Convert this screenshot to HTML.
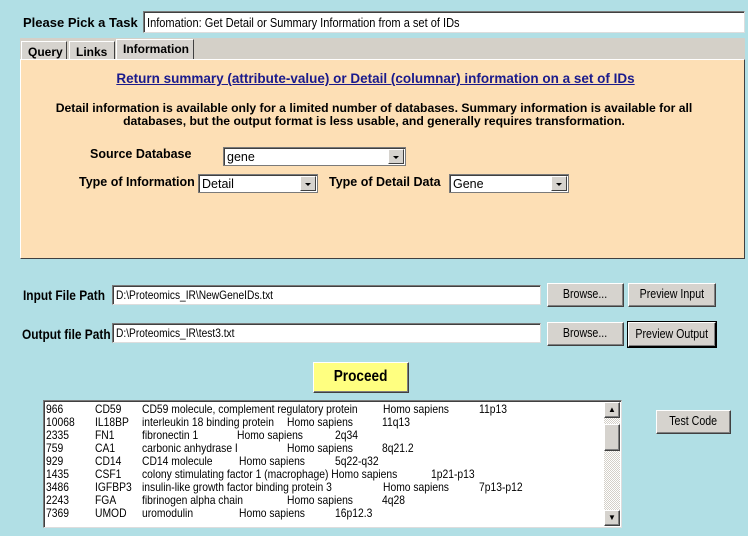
<!DOCTYPE html>
<html><head><meta charset="utf-8"><style>
*{box-sizing:border-box;margin:0;padding:0}
body{width:748px;height:536px;background:#b1dfe5;font-family:"Liberation Sans",sans-serif;position:relative;overflow:hidden;font-size:12px;color:#000}
.a{position:absolute;white-space:nowrap}
.b{font-weight:bold}
.inp{position:absolute;background:#fff;border:1px solid #7a7a7a;border-right-color:#ddd;border-bottom-color:#ddd;box-shadow:inset 1px 1px 0 #404040}
.btn{position:absolute;background:#d6d3ce;border:1px solid;border-color:#fff #404040 #404040 #fff;box-shadow:inset -1px -1px 0 #808080;text-align:center;font-size:12.5px}
.btn i{font-style:normal;display:inline-block;transform:scaleX(0.85)}
.sel{position:absolute;background:#fff;border:1px solid #7a7a7a;box-shadow:inset 1px 1px 0 #404040;font-size:12.5px;padding:2px 0 0 3px}
.arr{position:absolute;right:1px;top:1px;bottom:1px;width:16px;background:#d6d3ce;border:1px solid;border-color:#fff #404040 #404040 #fff}
.arr:after{content:"";position:absolute;left:4px;top:6px;border-left:3px solid transparent;border-right:3px solid transparent;border-top:3px solid #000}
.n{transform:scaleX(0.85);transform-origin:0 0}
.tab{position:absolute;background:#d6d3ce;border:1px solid;border-color:#fff #404040 transparent #fff;font-weight:bold;font-size:12px;padding:4px 0 0 6px}
.r{position:absolute;left:46px;height:13px;font-size:12px;line-height:13px;white-space:nowrap}
.r span{position:absolute;top:0;transform:scaleX(0.86);transform-origin:0 0}
</style></head><body>
<div class="a b" style="left:23px;top:15px;font-size:13px">Please Pick a Task</div>
<div class="inp" style="left:143px;top:11px;width:602px;height:22px"></div>
<div class="a n" style="left:147px;top:15px;font-size:13px">Infomation: Get Detail or Summary Information from a set of IDs</div>

<div class="a" style="left:20px;top:38px;width:725px;height:22px;background:#d4d0c8"></div>
<div class="tab" style="left:21px;top:41px;width:46px;height:19px;padding-top:3px">Query</div>
<div class="tab" style="left:69px;top:41px;width:46px;height:19px;padding-top:3px">Links</div>
<div class="tab" style="left:116px;top:39px;width:78px;height:21px;padding-top:2px">Information</div>
<div class="a" style="left:20px;top:59px;width:725px;height:200px;background:#fddfb5;border:1px solid;border-color:#fff #404040 #404040 #fff"></div>
<div class="a b" style="left:0;width:748px;top:71px;text-align:center;color:#1a1a8c;text-decoration:underline;font-size:13.5px;padding-left:3px">Return summary (attribute-value) or Detail (columnar) information on a set of IDs</div>
<div class="a b" style="left:0;width:748px;top:102px;text-align:center;line-height:13px;font-size:12.2px;padding-left:0">Detail information is available only for a limited number of databases. Summary information is available for all<br>databases, but the output format is less usable, and generally requires transformation.</div>
<div class="a b" style="left:90px;top:147px;font-size:12.5px">Source Database</div>
<div class="sel" style="left:223px;top:147px;width:183px;height:19px">gene<div class="arr"></div></div>
<div class="a b" style="left:79px;top:175px;font-size:12.5px">Type of Information</div>
<div class="sel" style="left:198px;top:174px;width:120px;height:19px">Detail<div class="arr"></div></div>
<div class="a b" style="left:329px;top:175px;font-size:12.5px">Type of Detail Data</div>
<div class="sel" style="left:449px;top:174px;width:120px;height:19px">Gene<div class="arr"></div></div>

<div class="a b n" style="left:23px;top:287px;font-size:14px">Input File Path</div>
<div class="inp" style="left:112px;top:285px;width:429px;height:20px"></div>
<div class="a n" style="left:116px;top:288px;font-size:12px">D:\Proteomics_IR\NewGeneIDs.txt</div>
<div class="btn" style="left:547px;top:283px;width:77px;height:24px;line-height:21px"><i>Browse...</i></div>
<div class="btn" style="left:628px;top:283px;width:88px;height:24px;line-height:21px"><i>Preview Input</i></div>

<div class="a b n" style="left:22px;top:326px;font-size:14px">Output file Path</div>
<div class="inp" style="left:112px;top:323px;width:429px;height:20px"></div>
<div class="a n" style="left:116px;top:326px;font-size:12px">D:\Proteomics_IR\test3.txt</div>
<div class="btn" style="left:547px;top:322px;width:77px;height:24px;line-height:21px"><i>Browse...</i></div>
<div class="btn" style="left:628px;top:322px;width:88px;height:25px;line-height:22px;border-color:#fff #000 #000 #fff;outline:1px solid #000"><i>Preview Output</i></div>

<div class="btn" style="left:313px;top:362px;width:96px;height:31px;background:#ffff80;font-weight:bold;font-size:16px;line-height:28px"><i>Proceed</i></div>

<div class="inp" style="left:43px;top:400px;width:579px;height:128px"></div>
<div class="a" style="left:604px;top:402px;width:16px;height:124px;background:repeating-conic-gradient(#fff 0 25%,#d4d0c8 0 50%) 0 0/2px 2px"></div>
<div class="btn" style="left:604px;top:402px;width:16px;height:16px;font-size:8px;line-height:13px">▲</div>
<div class="btn" style="left:604px;top:424px;width:16px;height:27px"></div>
<div class="btn" style="left:604px;top:510px;width:16px;height:16px;font-size:8px;line-height:13px">▼</div>

<div class="r" style="top:403px"><span style="left:0">966</span><span style="left:49px">CD59</span><span style="left:96px">CD59 molecule, complement regulatory protein</span><span style="left:337px">Homo sapiens</span><span style="left:433px">11p13</span></div>
<div class="r" style="top:416px"><span style="left:0">10068</span><span style="left:49px">IL18BP</span><span style="left:96px">interleukin 18 binding protein</span><span style="left:241px">Homo sapiens</span><span style="left:336px">11q13</span></div>
<div class="r" style="top:429px"><span style="left:0">2335</span><span style="left:49px">FN1</span><span style="left:96px">fibronectin 1</span><span style="left:191px">Homo sapiens</span><span style="left:289px">2q34</span></div>
<div class="r" style="top:442px"><span style="left:0">759</span><span style="left:49px">CA1</span><span style="left:96px">carbonic anhydrase I</span><span style="left:241px">Homo sapiens</span><span style="left:336px">8q21.2</span></div>
<div class="r" style="top:455px"><span style="left:0">929</span><span style="left:49px">CD14</span><span style="left:96px">CD14 molecule</span><span style="left:193px">Homo sapiens</span><span style="left:289px">5q22-q32</span></div>
<div class="r" style="top:468px"><span style="left:0">1435</span><span style="left:49px">CSF1</span><span style="left:96px">colony stimulating factor 1 (macrophage) Homo sapiens</span><span style="left:385px">1p21-p13</span></div>
<div class="r" style="top:481px"><span style="left:0">3486</span><span style="left:49px">IGFBP3</span><span style="left:96px">insulin-like growth factor binding protein 3</span><span style="left:337px">Homo sapiens</span><span style="left:433px">7p13-p12</span></div>
<div class="r" style="top:494px"><span style="left:0">2243</span><span style="left:49px">FGA</span><span style="left:96px">fibrinogen alpha chain</span><span style="left:241px">Homo sapiens</span><span style="left:336px">4q28</span></div>
<div class="r" style="top:507px"><span style="left:0">7369</span><span style="left:49px">UMOD</span><span style="left:96px">uromodulin</span><span style="left:193px">Homo sapiens</span><span style="left:289px">16p12.3</span></div>

<div class="btn" style="left:656px;top:410px;width:75px;height:24px;line-height:21px"><i>Test Code</i></div>
</body></html>
